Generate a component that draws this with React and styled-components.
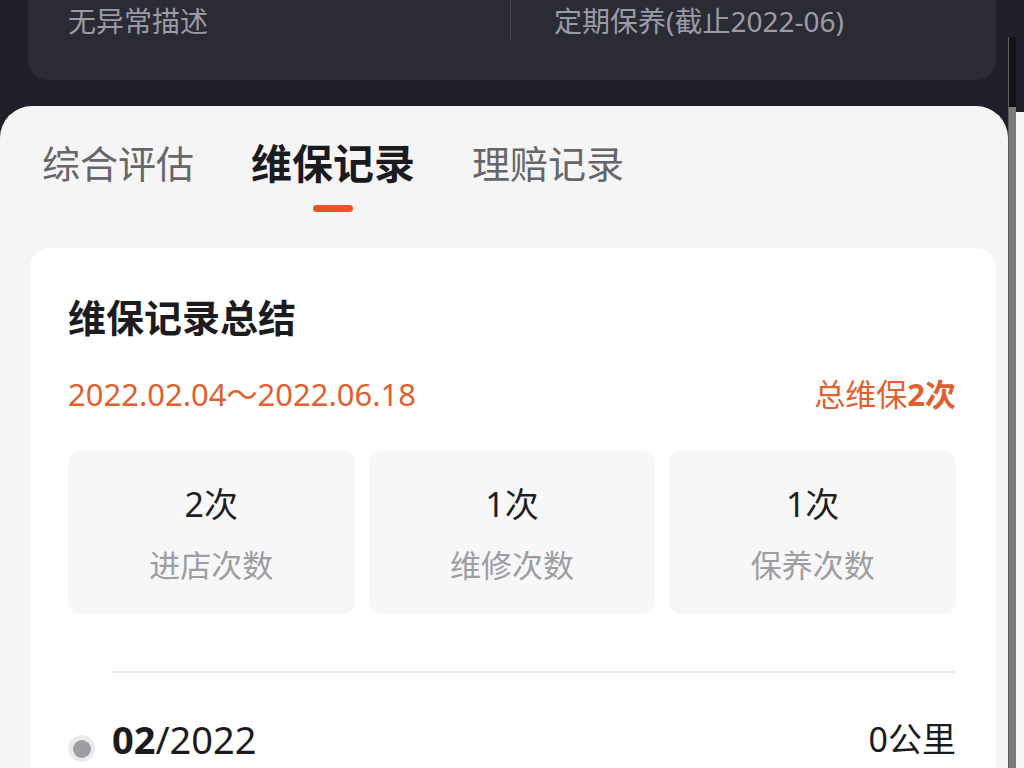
import styled, { createGlobalStyle } from "styled-components";

const GlobalStyle = createGlobalStyle`
    html, body {
        margin: 0;
        padding: 0;
        background: #1f1f29;
        font-family: "Noto Sans", "Noto Sans CJK SC", sans-serif;
    }
`;

const Screen = styled.div`
    width: 1024px;
    height: 768px;
    overflow: hidden;
    display: flex;
    background: #1f1f29;
`;

const Main = styled.div`
    width: 1008px;
    display: flex;
    flex-direction: column;
`;

const Rail = styled.div`
    width: 16px;
    display: flex;
    padding-top: 37px;
    background: linear-gradient(#1f1f29 0, #1f1f29 112px, #f6f6f6 112px);
`;

const RailBar = styled.div`
    width: 7px;
    background: linear-gradient(#121219 0, #121219 70px, #7b7b7d 70px);
    border-left: 1px solid #5d5d60;
`;

const InfoCard = styled.div`
    flex-shrink: 0;
    margin: 0 12px 0 28px;
    height: 80px;
    display: flex;
    background: #2b2b36;
    border-radius: 0 0 20px 20px;
`;

const InfoCell = styled.div`
    flex: 1;
    height: 40px;
    display: flex;
    align-items: center;
    padding-left: ${(p) => p.$indent}px;
    color: #9b9ba6;
    font-size: 28px;
    border-right: ${(p) => (p.$divider ? "1px solid #45454f" : "none")};
    box-sizing: border-box;
`;

const Sheet = styled.div`
    margin-top: 26px;
    flex: 1;
    background: #f5f5f5;
    border-radius: 32px 32px 0 0;
    padding-top: 34px;
`;

const Tabs = styled.div`
    display: flex;
    gap: 57px;
    padding-left: 42px;
`;

const Tab = styled.div`
    display: flex;
    flex-direction: column;
    align-items: center;
    gap: 19px;
    font-size: ${(p) => (p.$active ? 41 : 38)}px;
    line-height: 46px;
    font-weight: ${(p) => (p.$active ? 700 : 400)};
    color: ${(p) => (p.$active ? "#1a1a1f" : "#666669")};

    &::after {
        content: "";
        width: 40px;
        height: 7px;
        border-radius: 4px;
        background: ${(p) => (p.$active ? "#e8542a" : "transparent")};
    }
`;

const Card = styled.div`
    margin: 36px 12px 0 30px;
    background: #ffffff;
    border-radius: 20px 20px 0 0;
    padding: 46px 40px 0 38px;
    height: 600px;
`;

const Title = styled.div`
    font-size: 38px;
    line-height: 46px;
    font-weight: 700;
    color: #1c1c20;
`;

const RangeRow = styled.div`
    margin-top: 36px;
    display: flex;
    justify-content: space-between;
    align-items: center;
    line-height: 36px;
    color: #e0602f;
    font-size: 31px;

    & b {
        font-weight: 700;
    }
`;

const Stats = styled.div`
    margin-top: 39px;
    display: grid;
    grid-template-columns: repeat(3, 1fr);
    gap: 14px;
`;

const StatBox = styled.div`
    height: 163px;
    background: #f7f7f8;
    border-radius: 12px;
    display: flex;
    flex-direction: column;
    align-items: center;
    padding-top: 32px;
    box-sizing: border-box;
`;

const StatValue = styled.div`
    font-size: 34px;
    line-height: 42px;
    color: #1e1e22;
`;

const StatLabel = styled.div`
    margin-top: 20px;
    font-size: 31px;
    line-height: 40px;
    color: #9d9da2;
`;

const Divider = styled.div`
    margin: 57px 0 0 44px;
    height: 2px;
    background: #ececee;
`;

const Entry = styled.div`
    margin-top: 42px;
    display: flex;
    align-items: center;
    gap: 17px;
`;

const Dot = styled.div`
    width: 27px;
    height: 27px;
    margin-top: 20px;
    border-radius: 50%;
    background: #ebebee;
    display: flex;
    align-items: center;
    justify-content: center;

    &::before {
        content: "";
        width: 18px;
        height: 18px;
        border-radius: 50%;
        background: #9d9da2;
    }
`;

const Month = styled.div`
    flex: 1;
    font-size: 38px;
    line-height: 42px;
    color: #1c1c20;

    & b {
        font-weight: 700;
    }
`;

const Distance = styled.div`
    font-size: 34px;
    line-height: 42px;
    color: #1c1c20;
`;

const tabs = ["综合评估", "维保记录", "理赔记录"];

const stats = [
    { value: "2次", label: "进店次数" },
    { value: "1次", label: "维修次数" },
    { value: "1次", label: "保养次数" },
];

export default function App() {
    return (
        <>
            <GlobalStyle />
            <Screen>
                <Main>
                    <InfoCard>
                        <InfoCell $indent={40} $divider>无异常描述</InfoCell>
                        <InfoCell $indent={43}>定期保养(截止2022-06)</InfoCell>
                    </InfoCard>
                    <Sheet>
                        <Tabs>
                            {tabs.map((t) => (
                                <Tab key={t} $active={t === "维保记录"}>
                                    {t}
                                </Tab>
                            ))}
                        </Tabs>
                        <Card>
                            <Title>维保记录总结</Title>
                            <RangeRow>
                                <span>2022.02.04～2022.06.18</span>
                                <span>
                                    总维保<b>2次</b>
                                </span>
                            </RangeRow>
                            <Stats>
                                {stats.map((s) => (
                                    <StatBox key={s.label}>
                                        <StatValue>{s.value}</StatValue>
                                        <StatLabel>{s.label}</StatLabel>
                                    </StatBox>
                                ))}
                            </Stats>
                            <Divider />
                            <Entry>
                                <Dot />
                                <Month>
                                    <b>02</b>/2022
                                </Month>
                                <Distance>0公里</Distance>
                            </Entry>
                        </Card>
                    </Sheet>
                </Main>
                <Rail>
                    <RailBar />
                </Rail>
            </Screen>
        </>
    );
}
